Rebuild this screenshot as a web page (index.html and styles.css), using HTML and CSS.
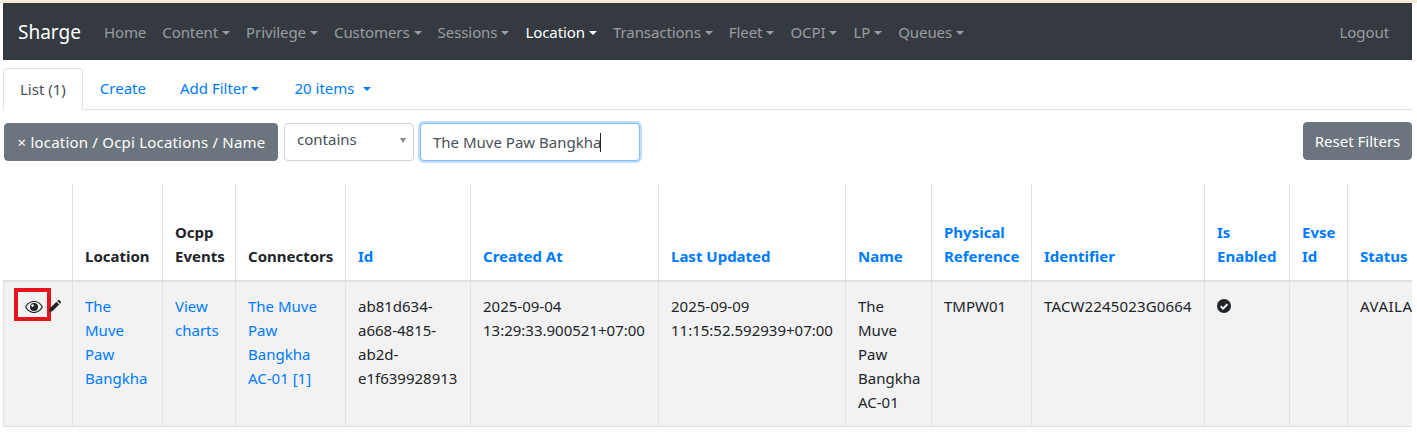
FILE: index.html
```html
<!DOCTYPE html>
<html lang="en">
<head>
<meta charset="utf-8">
<title>Sharge</title>
<link rel="stylesheet" href="styles.css">
</head>
<body>
<div class="page">
  <nav class="navbar">
    <a class="brand">Sharge</a>
    <a class="nav-link">Home</a>
    <a class="nav-link dd">Content</a>
    <a class="nav-link dd">Privilege</a>
    <a class="nav-link dd">Customers</a>
    <a class="nav-link dd">Sessions</a>
    <a class="nav-link dd active">Location</a>
    <a class="nav-link dd">Transactions</a>
    <a class="nav-link dd">Fleet</a>
    <a class="nav-link dd">OCPI</a>
    <a class="nav-link dd">LP</a>
    <a class="nav-link dd">Queues</a>
    <a class="nav-link logout">Logout</a>
  </nav>
  <ul class="tabs">
    <li class="tab current">List (1)</li>
    <li class="tab">Create</li>
    <li class="tab dd">Add Filter</li>
    <li class="tab dd wide">20 items</li>
  </ul>
  <div class="filters">
    <button class="btn field-btn">× location / Ocpi Locations / Name</button>
    <div class="select">contains<span class="select-arrow"></span></div>
    <div class="input-wrap">
      <input class="input" type="text" value="The Muve Paw Bangkha">
      <span class="text-caret"></span>
    </div>
    <button class="btn reset">Reset Filters</button>
  </div>
  <div class="table-wrap">
    <table class="grid">
      <colgroup>
        <col class="c1"><col class="c2"><col class="c3"><col class="c4"><col class="c5"><col class="c6"><col class="c7"><col class="c8"><col class="c9"><col class="c10"><col class="c11"><col class="c12"><col class="c13">
      </colgroup>
      <thead>
        <tr>
          <th></th>
          <th>Location</th>
          <th>Ocpp Events</th>
          <th>Connectors</th>
          <th class="sort">Id</th>
          <th class="sort">Created At</th>
          <th class="sort">Last Updated</th>
          <th class="sort">Name</th>
          <th class="sort">Physical Reference</th>
          <th class="sort">Identifier</th>
          <th class="sort">Is Enabled</th>
          <th class="sort">Evse Id</th>
          <th class="sort">Status</th>
        </tr>
      </thead>
      <tbody>
        <tr>
          <td class="actions">
            <span class="mark"></span>
            <svg class="eye" viewBox="0 0 18 12" width="18" height="12" aria-hidden="true"><path fill="#212529" fill-rule="evenodd" d="M9 0C5 0 1.8 2.4 0 6c1.8 3.600 5 6 9 6s7.200-2.400 9-6c-1.800-3.600-5-6-9-6zm0 1.100c3.300 0 6 1.900 7.700 4.900-1.700 3-4.400 4.900-7.700 4.900S3 9 1.300 6C3 3 5.700 1.100 9 1.100zM9 2a4 4 0 1 0 0 8 4 4 0 0 0 0-8z"/><circle cx="7.600" cy="4.600" r="1.300" fill="#f2f2f2"/></svg>
            <svg class="pencil" viewBox="0 0 12 12" width="12" height="12" aria-hidden="true"><path fill="#212529" d="M0 12l.7-3.400L7.500 1.800l2.700 2.700-6.800 6.800L0 12zM8.300 1l.7-.7c.4-.4 1-.4 1.400 0l1.300 1.300c.4.400.4 1 0 1.400l-.7.700L8.300 1z"/></svg>
          </td>
          <td><a>The Muve Paw Bangkha</a></td>
          <td><a>View charts</a></td>
          <td><a>The Muve Paw Bangkha AC-01 [1]</a></td>
          <td>ab81d634-a668-4815-ab2d-e1f639928913</td>
          <td>2025-09-04 13:29:33.900521+07:00</td>
          <td>2025-09-09 11:15:52.592939+07:00</td>
          <td>The Muve Paw Bangkha AC-01</td>
          <td>TMPW01</td>
          <td class="serial">TACW2245023G0664</td>
          <td><svg class="check" viewBox="0 0 14 14" width="14" height="14" aria-hidden="true"><circle cx="7" cy="7" r="7" fill="#212529"/><path d="M3.700 7.200l2.400 2.400 4.300-4.400" fill="none" stroke="#f2f2f2" stroke-width="2"/></svg></td>
          <td></td>
          <td class="status">AVAILABLE</td>
        </tr>
      </tbody>
    </table>
  </div>
</div>
</body>
</html>
```
FILE: styles.css
```css
* { box-sizing: border-box; }
html, body { margin: 0; padding: 0; background: #fff; }
body {
  font-family: "Noto Sans", "Open Sans", "Liberation Sans", sans-serif;
  font-size: 15px;
  line-height: 24px;
  color: #212529;
  border-top: 3px solid #f3ead9;
  overflow: hidden;
  height: 433px;
}
.page { width: 1409px; margin-left: 3px; }

.navbar {
  display: flex;
  align-items: center;
  height: 57px;
  padding: 0 15px;
  background: #343a40;
}
.brand { color: #fff; font-size: 19px; margin-right: 15px; padding-top: 1px; }
.nav-link { padding: 0 8px; color: rgba(255,255,255,.5); white-space: nowrap; letter-spacing: -.08px; }
.nav-link.active { color: #fff; }
.logout { margin-left: auto; }
.dd::after {
  content: "";
  display: inline-block;
  margin-left: 4px;
  vertical-align: 3px;
  border-top: 4.800px solid;
  border-left: 4.800px solid transparent;
  border-right: 4.800px solid transparent;
}

.tabs {
  display: flex;
  list-style: none;
  margin: 8px 0 0;
  padding: 0;
  height: 42px;
  border-bottom: 1px solid #dee2e6;
}
.tab { padding: 8px 16px; color: #007bff; height: 42px; white-space: nowrap; margin-left: 2px; }
.tab.current {
  margin-left: 0;
  color: #495057;
  background: #fff;
  border: 1px solid #dee2e6;
  border-bottom-color: #fff;
  border-radius: 4px 4px 0 0;
}
.tab.current + .tab { margin-left: 1px; }
.tab.wide { margin-left: 3px; }
.tab.wide::after { margin-left: 8px; }

.filters {
  display: flex;
  align-items: flex-start;
  gap: 6px;
  margin-top: 13px;
  padding-left: 1px;
}
.btn {
  font: inherit;
  color: #fff;
  background: #6c757d;
  border: 1px solid #6c757d;
  border-radius: 4px;
  height: 38px;
  white-space: nowrap;
}
.field-btn { width: 274px; padding: 0 0 1px 1px; letter-spacing: .2px; }
.select {
  position: relative;
  width: 130px;
  height: 38px;
  padding: 3px 12px;
  color: #495057;
  background: #fff;
  border: 1px solid #ced4da;
  border-radius: 4px;
}
.select-arrow {
  position: absolute;
  right: 7px;
  top: 14px;
  border-top: 5px solid #888;
  border-left: 3px solid transparent;
  border-right: 3px solid transparent;
}
.input-wrap { position: relative; width: 220px; height: 38px; }
.input {
  width: 100%;
  height: 38px;
  padding: 0 12px;
  font: inherit;
  color: #495057;
  background: #fff;
  border: 1px solid #80bdff;
  border-radius: 4px;
  box-shadow: 0 0 0 2px rgba(0,123,255,.25);
  outline: 0;
}
.text-caret {
  position: absolute;
  left: 180px;
  top: 10px;
  width: 1px;
  height: 19px;
  background: #212529;
}
.reset { margin-left: auto; margin-top: -1px; width: 109px; padding: 0; }

.table-wrap { margin-top: 23px; width: 1409px; overflow: hidden; }
.grid {
  table-layout: fixed;
  width: 1463px;
  border-collapse: collapse;
}
.c1 { width: 69px; } .c2 { width: 90px; } .c3 { width: 73px; } .c4 { width: 110px; }
.c5 { width: 125px; } .c6 { width: 188px; } .c7 { width: 187px; } .c8 { width: 86px; }
.c9 { width: 100px; } .c10 { width: 173px; } .c11 { width: 85px; } .c12 { width: 58px; }
.c13 { width: 119px; }
.grid th, .grid td {
  border-left: 1px solid #dee2e6;
  border-right: 1px solid #dee2e6;
  padding: 12px;
  text-align: left;
  vertical-align: top;
}
.grid thead th {
  height: 97px;
  vertical-align: bottom;
  font-weight: 700;
  border-bottom: 2px solid #dee2e6;
  color: #212529;
}
.grid thead th:first-child { border-left-color: transparent; }
.grid th.sort { color: #007bff; }
.grid tbody td { height: 145px; background: #f2f2f2; border-bottom: 1px solid #dee2e6; }
.grid a { color: #007bff; }
.serial { letter-spacing: .15px; }
.status { white-space: nowrap; letter-spacing: .5px; }

.grid .actions { position: relative; padding: 0; }
.mark {
  position: absolute;
  left: 10px;
  top: 6px;
  width: 37px;
  height: 33px;
  border: 4.500px solid #e3141c;
}
.eye { position: absolute; left: 21px; top: 19px; }
.pencil { position: absolute; left: 45px; top: 18px; }
.check { vertical-align: -1px; }
```
